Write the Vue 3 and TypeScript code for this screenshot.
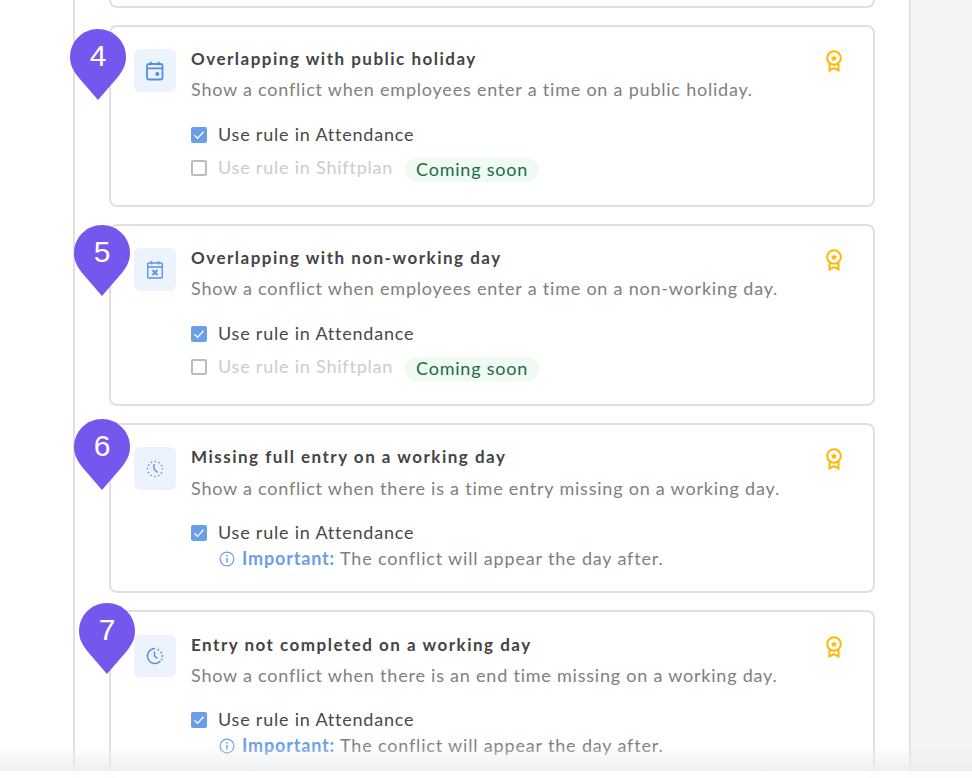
<script setup lang="ts">
interface Rule {
  pin: string
  pinClass: string
  icon: 'holiday' | 'nonworking' | 'missing' | 'incomplete'
  title: string
  desc: string
  shiftplan: boolean
}
const rules: Rule[] = [
  { pin: '4', pinClass: 'pin-a', icon: 'holiday', title: 'Overlapping with public holiday', desc: 'Show a conflict when employees enter a time on a public holiday.', shiftplan: true },
  { pin: '5', pinClass: 'pin-b', icon: 'nonworking', title: 'Overlapping with non-working day', desc: 'Show a conflict when employees enter a time on a non-working day.', shiftplan: true },
  { pin: '6', pinClass: 'pin-c', icon: 'missing', title: 'Missing full entry on a working day', desc: 'Show a conflict when there is a time entry missing on a working day.', shiftplan: false },
  { pin: '7', pinClass: 'pin-d', icon: 'incomplete', title: 'Entry not completed on a working day', desc: 'Show a conflict when there is an end time missing on a working day.', shiftplan: false },
]
</script>

<template>
  <div class="page">
    <main class="panel">
      <div class="card-stub"></div>
      <section v-for="r in rules" :key="r.pin" class="card" :class="[r.shiftplan ? 'tall' : 'short', r.pinClass]">
        <div class="pin">
          <svg class="pin-shape" width="56" height="71" viewBox="0 0 56 71">
            <path d="M28 0C12.500 0 0 12.500 0 28c0 8 3.500 14.500 9 21L28 71 47 49c5.500-6.500 9-13 9-21C56 12.500 43.500 0 28 0Z" fill="#7657ee" />
          </svg>
          <span class="pin-num">{{ r.pin }}</span>
        </div>
        <div class="icon-box">
          <svg v-if="r.icon === 'holiday'" width="20" height="20" viewBox="0 0 20 20" fill="none" stroke="#4f8fe6" stroke-width="1.800">
            <rect x="2" y="3" width="15.500" height="15.500" rx="2" />
            <path d="M2 7.300h15.500M5.800 .8v3.500M13.700 .8v3.500" />
            <circle cx="12.300" cy="13" r="2" fill="#4f8fe6" stroke="none" />
          </svg>
          <svg v-else-if="r.icon === 'nonworking'" width="18" height="20" viewBox="0 0 18 20" fill="none" stroke="#5a95e6" stroke-width="1.400">
            <rect x="1.700" y="3" width="14.600" height="15" rx="1" />
            <path d="M1.700 7h14.600M5.500 1v3.500M12.500 1v3.500" />
            <path d="M6.500 10l5 5M11.500 10l-5 5" stroke-width="1.900" />
          </svg>
          <svg v-else-if="r.icon === 'missing'" width="18" height="18" viewBox="0 0 18 18" fill="none" stroke="#4f8fe6">
            <circle cx="9" cy="9" r="7.500" stroke-width="1.500" stroke-dasharray=".1 3.830" stroke-linecap="round" />
            <path d="M8 4V9L11.500 12.500" stroke-width="1.400" />
          </svg>
          <svg v-else width="18" height="18" viewBox="0 0 18 18" fill="none" stroke="#4f8fe6" stroke-width="1.500">
            <path d="M9 1.500A7.500 7.500 0 1 0 14.500 14.100" />
            <path d="M8.500 4.500V9L11.500 11.500" />
            <circle cx="12.300" cy="2.700" r=".9" fill="#4f8fe6" stroke="none" />
            <circle cx="15.200" cy="5.500" r=".9" fill="#4f8fe6" stroke="none" />
            <circle cx="16.300" cy="9" r=".9" fill="#4f8fe6" stroke="none" />
            <circle cx="15.800" cy="12.300" r=".9" fill="#4f8fe6" stroke="none" />
          </svg>
        </div>
        <div class="body">
          <h3 class="title">{{ r.title }}</h3>
          <p class="desc">{{ r.desc }}</p>
          <div class="option first">
            <span class="box checked">
              <svg width="16" height="16" viewBox="0 0 16 16" fill="none" stroke="#fff" stroke-width="1.300"><path d="M3.500 8.300 6.600 11.400 12.500 4.800" /></svg>
            </span>
            <span class="label">Use rule in Attendance</span>
          </div>
          <div v-if="r.shiftplan" class="option second">
            <span class="box"></span>
            <span class="label disabled">Use rule in Shiftplan</span>
            <span class="pill">Coming soon</span>
          </div>
          <div v-else class="note">
            <svg width="16" height="16" viewBox="0 0 16 16" fill="none" stroke="#6a9fe8" stroke-width="1.200">
              <circle cx="8" cy="8" r="6.900" />
              <path d="M8 7v4.500" stroke-width="1.500" />
              <circle cx="8" cy="4.800" r=".9" fill="#6a9fe8" stroke="none" />
            </svg>
            <span class="note-text"><b>Important:</b> The conflict will appear the day after.</span>
          </div>
        </div>
        <svg class="medal" width="18" height="22" viewBox="0 0 18 22" fill="none" stroke="#ffb703" stroke-width="2">
          <circle cx="9" cy="8" r="6.800" />
          <path d="M4.500 14v6.500L9 18.200l4.500 2.300V14" />
          <path d="M9 5l1 2 2.200.3-1.600 1.500.4 2.200L9 10l-2 1 .4-2.200-1.600-1.500L8 7Z" fill="#ffb703" stroke="none" />
        </svg>
      </section>
    </main>
    <div class="fade"></div>
  </div>
</template>

<style>
html, body { margin: 0; background: #fff; }
</style>

<style scoped>
.page {
  position: relative;
  width: 972px;
  height: 778px;
  overflow: hidden;
  background: linear-gradient(to right, #fff 0, #fff 911px, #f4f4f4 911px);
  font-family: "Lato", "Noto Sans", sans-serif;
  font-size: 18px;
  letter-spacing: .78px;
}
.panel {
  box-sizing: border-box;
  width: 838px;
  height: 778px;
  margin-left: 73px;
  padding-left: 34px;
  border-left: 2px solid #e0e0e0;
  border-right: 2px solid #e0e0e0;
  background: #fff;
  display: flex;
  flex-direction: column;
  gap: 17px;
}
.card-stub {
  box-sizing: border-box;
  flex: none;
  width: 766px;
  height: 8px;
  border: 2px solid #e0e0e0;
  border-top: none;
  border-radius: 0 0 8px 8px;
}
.card {
  box-sizing: border-box;
  flex: none;
  position: relative;
  width: 766px;
  height: 170px;
  padding: 22px 30px 0 23px;
  border: 2px solid #e0e0e0;
  border-radius: 8px;
  background: #fff;
  display: flex;
  align-items: flex-start;
  gap: 15px;
}
.card.tall { height: 182px; }
.pin { position: absolute; width: 56px; height: 71px; z-index: 2; }
.pin-a .pin { left: -41px; top: 2px; }
.pin-b .pin { left: -37px; top: -1px; }
.pin-c .pin { left: -37px; top: -6px; }
.pin-d .pin { left: -32px; top: -9px; }
.pin-shape { display: block; }
.pin-num {
  position: absolute;
  left: 0;
  right: 0;
  top: 11px;
  text-align: center;
  color: #fff;
  font-family: "Liberation Sans", Arial, sans-serif;
  font-size: 30px;
  letter-spacing: 0;
  line-height: 32px;
}
.icon-box {
  flex: none;
  width: 42px;
  height: 43px;
  border-radius: 6px;
  background: #ecf3fc;
  display: flex;
  align-items: center;
  justify-content: center;
}
.body { flex: 1; min-width: 0; }
.title {
  margin: 0;
  font-size: 17px;
  font-weight: 700;
  letter-spacing: 1.500px;
  line-height: 20px;
  color: #444;
}
.desc {
  margin: 10px 0 0;
  line-height: 20px;
  color: #808080;
}
.option {
  display: flex;
  align-items: center;
  gap: 11px;
  margin-top: 26px;
  height: 20px;
}
.second { margin-top: 13px; }
.short .desc { margin-top: 11px; }
.short .first { margin-top: 25px; }
.pin-d { padding-top: 23px; }
.pin-d .icon-box { height: 42px; }
.pin-d .desc { margin-top: 10px; }
.box {
  box-sizing: border-box;
  flex: none;
  width: 16px;
  height: 16px;
  border: 2px solid #bbb;
  border-radius: 2px;
}
.box.checked { border: none; background: #6a9fe8; }
.box svg { display: block; }
.label { color: #484848; line-height: 20px; margin-top: -2px; }
.label.disabled { color: #ccc; }
.pill {
  margin: 3px 0 0 1px;
  height: 24px;
  padding: 0 11px;
  border-radius: 12px;
  background: #eefaf2;
  color: #1f6b45;
  line-height: 23px;
}
.note {
  display: flex;
  align-items: center;
  gap: 7px;
  margin: 6px 0 0 28px;
  height: 20px;
  color: #808080;
  letter-spacing: .83px;
}
.note-text { margin-top: -2px; }
.note b { color: #6a9fe8; font-weight: 700; }
.medal { flex: none; margin-top: 1px; }
.fade {
  position: absolute;
  left: 0;
  right: 0;
  bottom: 0;
  height: 33px;
  background: linear-gradient(to bottom, rgba(238,238,238,0) 0, rgba(238,238,238,.95) 26px, rgba(255,255,255,.9) 26px);
  z-index: 3;
}
</style>
